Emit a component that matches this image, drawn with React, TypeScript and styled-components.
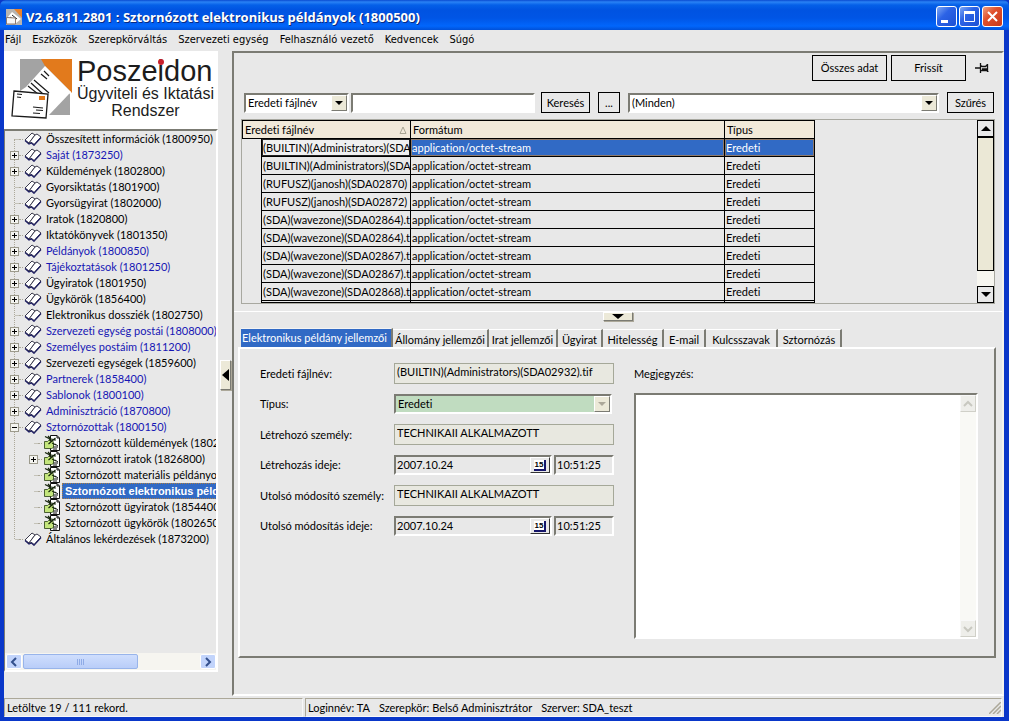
import React from "react";
import styled, { createGlobalStyle, css } from "styled-components";

const face = "#e8e8e8";
const cream = "#ece9d8";
const shade = "#7b7b73";
const blue = "#316ac5";
const uiFont = 'Lato, "Liberation Sans", sans-serif';
const logoFont = '"Liberation Sans", Arial, sans-serif';
const menuFont = '"DejaVu Sans Condensed", "DejaVu Sans", sans-serif';
const titleFont = '"Open Sans", "DejaVu Sans", sans-serif';

const GlobalStyle = createGlobalStyle`
  *, *::before, *::after { box-sizing: border-box; }
  body { margin: 0; background: ${face}; color: #000; font: 11px/16px ${uiFont}; font-variant-ligatures: none; }
  button, input, select, textarea { font: inherit; font-variant-ligatures: none; color: inherit; margin: 0; border-radius: 0; }
  button { padding: 0; }
  svg { display: block; }
`;

const sunken = css`
  border: 2px solid;
  border-color: ${shade} #fff #fff ${shade};
`;
const raised = css`
  border: 1px solid;
  border-color: #fff ${shade} ${shade} #fff;
  box-shadow: 1px 1px 0 #aca899;
`;

const Window = styled.div`
  min-height: 100vh;
  display: flex;
  flex-direction: column;
  padding: 0 5px 4px 4px;
  background: #0a37c9;
`;

const TitleBar = styled.header`
  height: 30px;
  display: flex;
  align-items: center;
  gap: 4px;
  margin: 0 -5px 0 -4px;
  padding: 3px 6px 0 6px;
  border-radius: 6px 6px 0 0;
  background: linear-gradient(#0a4bd0 0, #2a82f5 2px, #0560e8 5px, #0053e1 10px, #0055e5 18px, #0166fc 26px, #0050d8 30px);
`;
const Title = styled.h1`
  flex: 1;
  margin: 0;
  color: #fff;
  font: bold 13px/16px ${titleFont};
  text-shadow: 1px 1px 0 #0a2a80;
`;
const WindowButtons = styled.div`
  display: flex;
  gap: 2px;
`;
const WindowButton = styled.button<{ $close?: boolean }>`
  width: 21px;
  height: 21px;
  border: 1px solid #fff;
  border-radius: 3px;
  background: ${(p) =>
    p.$close
      ? "linear-gradient(135deg, #f0a080, #e0502c 40%, #c8381a)"
      : "linear-gradient(135deg, #7fa8f4, #2c63e6 40%, #1c50d4)"};
`;

const MenuBar = styled.nav`
  height: 21px;
  display: flex;
  align-items: center;
  gap: 11px;
  padding: 0 1px 2px;
  background: ${face};
  font-family: ${menuFont};
`;
const MenuLink = styled.a`
  color: #000;
  text-decoration: none;
`;

const Body = styled.div`
  flex: 1;
  display: flex;
  background: ${face};
`;
const Sidebar = styled.aside`
  width: 214px;
  flex: none;
  display: flex;
  flex-direction: column;
  padding-bottom: 26px;
`;
const LogoBox = styled.div`
  height: 78px;
  display: flex;
  gap: 5px;
  padding: 7px 0 0 7px;
  background: #fff;
`;
const LogoText = styled.div`
  color: #1c1c1c;
  font-family: ${logoFont};
  font-size: 16px;
  line-height: 17px;
  text-align: center;
  white-space: nowrap;
`;
const Brand = styled.div`
  font-size: 29px;
  line-height: 27px;
  text-align: left;
`;
const DottedI = styled.span`
  position: relative;
  &::after {
    content: "";
    position: absolute;
    top: 4px;
    left: 0;
    width: 6px;
    height: 6px;
    border-radius: 50%;
    background: #c8202c;
  }
`;

const TreeBox = styled.div`
  flex: 1;
  display: flex;
  flex-direction: column;
  justify-content: space-between;
  overflow: hidden;
  ${sunken}
  border-left-width: 1px;
`;
const TreeList = styled.ul`
  position: relative;
  margin: 0;
  padding: 0;
  list-style: none;
  &::before {
    content: "";
    position: absolute;
    top: 8px;
    bottom: 8px;
    left: 9px;
    border-left: 1px dotted #aca899;
  }
`;
const TreeRow = styled.li<{ $level: number }>`
  position: relative;
  height: 16px;
  display: flex;
  align-items: center;
  padding-left: ${(p) => (p.$level ? 24 : 5)}px;
  white-space: nowrap;
`;
const Toggle = styled.button`
  width: 9px;
  height: 9px;
  flex: none;
  border: 1px solid #9c9a8c;
  background: #f4f4f0;
`;
const Stub = styled.span`
  width: 9px;
  height: 1px;
  flex: none;
  background: linear-gradient(90deg, transparent 50%, #c4c2b8 50%);
`;
const Twig = styled.span`
  width: 4px;
  flex: none;
  border-top: 1px dotted #aca899;
`;
const IconSlot = styled.span`
  width: 20px;
  flex: none;
  display: flex;
  justify-content: center;
`;
const TreeLink = styled.a<{ $blue?: boolean; $selected?: boolean }>`
  padding: 0 0 0 3px;
  line-height: 16px;
  text-decoration: none;
  color: ${(p) => (p.$blue ? "#1616b4" : "#000")};
  ${(p) =>
    p.$selected &&
    css`
      background: ${blue};
      color: #fff;
      font-family: ${logoFont};
      font-weight: bold;
      outline: 1px dotted #b08040;
      outline-offset: -1px;
    `}
`;

const HScroll = styled.div`
  height: 17px;
  display: flex;
  padding: 1px 0 1px 1px;
  background: #f6f5f0;
`;
const HScrollButton = styled.button`
  width: 16px;
  display: grid;
  place-items: center;
  border: 1px solid #fff;
  border-radius: 2px;
  background: #c2d4fb;
`;
const HThumb = styled.div`
  width: 115px;
  display: grid;
  place-items: center;
  margin: 0 auto 0 1px;
  border: 1px solid #98b4ea;
  border-radius: 2px;
  background: linear-gradient(#cfdefd, #b9cdf8);
`;

const Splitter = styled.div`
  width: 14px;
  flex: none;
  display: flex;
  align-items: center;
  justify-content: center;
`;
const SplitHandle = styled.button<{ $horizontal?: boolean }>`
  width: ${(p) => (p.$horizontal ? 30 : 11)}px;
  height: ${(p) => (p.$horizontal ? 9 : 30)}px;
  display: grid;
  place-items: center;
  background: ${cream};
  ${raised}
`;

const Main = styled.main`
  flex: 1;
  min-width: 0;
  display: flex;
  flex-direction: column;
  margin-bottom: 2px;
  border: 2px solid;
  border-color: ${shade} #f4f3ee #fff ${shade};
`;
const TopPane = styled.section`
  padding: 2px 7px 7px 7px;
  border-bottom: 1px solid #fff;
`;
const Toolbar = styled.div`
  display: flex;
  justify-content: flex-end;
  align-items: center;
  gap: 4px;
`;
const FlatButton = styled.button<{ $width: number; $tall?: boolean }>`
  width: ${(p) => p.$width}px;
  height: ${(p) => (p.$tall ? 26 : 21)}px;
  flex: none;
  border: 1px solid #000;
  background: ${face};
`;
const PinButton = styled.button`
  width: 25px;
  height: 24px;
  display: grid;
  place-items: center;
  border: 0;
  background: none;
`;
const FilterBar = styled.div`
  display: flex;
  align-items: center;
  padding: 11px 1px 6px 3px;
`;
const Gap = styled.span`
  width: 8px;
  flex: none;
`;
const SelectBox = styled.div<{ $width?: number; $tint?: string }>`
  display: grid;
  height: 20px;
  ${(p) => (p.$width ? `flex: 0 0 ${p.$width}px;` : "flex: 1; min-width: 0;")}
  background: ${(p) => p.$tint || "#fff"};
  ${sunken}
`;
const NativeSelect = styled.select`
  grid-area: 1 / 1;
  width: 100%;
  min-width: 0;
  padding: 0 18px 0 2px;
  border: 0;
  appearance: none;
  background: transparent;
  opacity: 1;
  &:disabled { color: #000; opacity: 1; }
`;
const DropArrow = styled.span`
  grid-area: 1 / 1;
  justify-self: end;
  width: 16px;
  display: grid;
  place-items: center;
  pointer-events: none;
  background: ${cream};
  border: 1px solid;
  border-color: #fff ${shade} ${shade} #fff;
`;
const SearchInput = styled.input`
  width: 184px;
  height: 20px;
  margin: 0 6px 0 2px;
  background: #fff;
  ${sunken}
`;

const GridFrame = styled.div`
  height: 185px;
  display: flex;
  justify-content: space-between;
  overflow: hidden;
  border: 1px solid #a8a8a0;
`;
const Table = styled.table`
  width: 573px;
  flex: none;
  table-layout: fixed;
  border-collapse: separate;
  border-spacing: 0;
`;
const Th = styled.th`
  height: 19px;
  padding: 0 3px 0 2px;
  border: solid #000;
  border-width: 1px 1px 1px 0;
  background: #f1e9da;
  font-weight: normal;
  text-align: left;
  &:first-child { border-left-width: 1px; }
`;
const HeadContent = styled.span`
  display: flex;
  align-items: center;
  justify-content: space-between;
`;
const Td = styled.td<{ $selected?: boolean; $focused?: boolean }>`
  height: 18px;
  padding: 0 1px;
  overflow: hidden;
  white-space: nowrap;
  border: solid #000;
  border-width: 0 1px 1px 0;
  ${(p) =>
    p.$selected &&
    css`
      background: ${blue};
      color: #fff;
      box-shadow: inset 0 0 0 1px #8d7a6c;
    `}
  ${(p) =>
    p.$focused &&
    css`
      background: #f0f0f0;
      box-shadow: inset 0 0 0 1px #222;
    `}
`;
const Indicator = styled.td`
  padding: 0;
  border-right: 1px solid #000;
`;
const Sliver = styled.td`
  height: 2px;
  padding: 0;
  border: solid #000;
  border-width: 0 1px 1px 0;
`;
const VScroll = styled.div`
  width: 17px;
  display: flex;
  flex-direction: column;
  background: #f7f6f0;
`;
const VScrollButton = styled.button`
  height: 17px;
  display: grid;
  place-items: center;
  border: 1px solid #000;
  background: ${face};
`;
const VThumb = styled.div`
  height: 134px;
  margin-bottom: auto;
  border: 1px solid #000;
  background: #ebe8d6;
`;

const PaneSplitter = styled.div`
  display: flex;
  justify-content: center;
  height: 15px;
`;
const TabRow = styled.div`
  display: flex;
  align-items: flex-end;
  height: 21px;
  padding-left: 7px;
`;
const Tab = styled.button<{ $width: number; $active?: boolean }>`
  width: ${(p) => p.$width}px;
  height: 19px;
  padding: 2px 0 0;
  border: 0;
  border-top: 1px solid #fff;
  border-right: 2px solid ${shade};
  background: ${face};
  line-height: 16px;
  white-space: nowrap;
  ${(p) =>
    p.$active &&
    css`
      height: 20px;
      padding: 0 0 1px 1px;
      border-top-color: #f4f4f4;
      background: ${blue};
      color: #fff;
      text-align: left;
    `}
`;
const TabPanel = styled.section`
  display: flex;
  gap: 20px;
  margin: -1px 6px 0 4px;
  padding: 14px 16px 17px 20px;
  border: 2px solid;
  border-color: #fff ${shade} ${shade} #fff;
`;
const Form = styled.form`
  width: 354px;
  flex: none;
  display: flex;
  flex-direction: column;
  gap: 10px;
`;
const FormRow = styled.div`
  display: flex;
  align-items: center;
`;
const Label = styled.label`
  width: 134px;
  flex: none;
`;
const ReadInput = styled.input`
  flex: 1;
  min-width: 0;
  height: 21px;
  padding: 0 2px 4px;
  border: 1px solid #a5a899;
  background: #e8e8e0;
`;
const DateBox = styled.div`
  width: 158px;
  height: 20px;
  display: flex;
  ${sunken}
`;
const DateInput = styled.input`
  flex: 1;
  min-width: 0;
  padding: 0 1px;
  border: 0;
  background: transparent;
`;
const CalendarButton = styled.button`
  width: 20px;
  border: 1px solid;
  border-color: #fff #333 #333 #fff;
  background: ${face};
  display: grid;
  place-items: center;
`;
const DayIcon = styled.span`
  width: 12px;
  height: 11px;
  border: solid #15156a;
  border-width: 0 2px 2px 0;
  background: #fff;
  font: bold 8px/9px ${logoFont};
`;
const TimeInput = styled.input`
  width: 60px;
  height: 20px;
  margin-left: 2px;
  padding: 0 1px 2px;
  background: transparent;
  ${sunken}
`;
const NoteColumn = styled.div`
  flex: 1;
  min-width: 0;
  display: flex;
  flex-direction: column;
  gap: 9px;
`;
const NoteLabel = styled.label`
  line-height: 21px;
`;
const NoteBox = styled.div`
  height: 246px;
  display: flex;
  background: #fff;
  ${sunken}
`;
const Note = styled.textarea`
  flex: 1;
  min-width: 0;
  resize: none;
  overflow: hidden;
  border: 0;
  background: #fff;
`;
const NoteScroll = styled.div`
  width: 16px;
  display: flex;
  flex-direction: column;
  justify-content: space-between;
  background: #f9f9f5;
`;
const NoteScrollButton = styled.button`
  height: 17px;
  display: grid;
  place-items: center;
  border: 1px solid;
  border-color: #f8f8f8 #d0d0c8 #d0d0c8 #f8f8f8;
  background: #eeeeea;
`;

const StatusBar = styled.footer`
  height: 19px;
  display: flex;
  align-items: stretch;
  background: ${face};
`;
const StatusCell = styled.div<{ $width?: number }>`
  ${(p) => (p.$width ? `flex: 0 0 ${p.$width}px;` : "flex: 1;")}
  display: flex;
  align-items: center;
  gap: 9px;
  margin-right: 2px;
  padding-left: 2px;
  border: 1px solid;
  border-color: #aca899 #f8f8f8 #f8f8f8 #aca899;
`;
const Grip = styled.span`
  display: flex;
  align-items: flex-end;
  margin-left: auto;
`;

const BookIcon = () => (
  <svg width="18" height="14" viewBox="0 0 18 14" aria-hidden="true">
    <path d="M1 8 8 1 11 3 5 11Z" fill="#fff" stroke="#3a3a4c" />
    <path d="M5 11 11 3 13 2 17 5 10 12.500 8 10.500Z" fill="#fff" stroke="#3a3a4c" />
    <path d="M1 8.500 5 12 7.500 11 10 13.300 17 5.500" fill="none" stroke="#1c1c60" strokeWidth="1.200" />
  </svg>
);
const PageIcon = () => (
  <svg width="16" height="16" viewBox="0 0 16 16" aria-hidden="true">
    <path d="M6.500.5H13l2.500 2.500V15.500H6.500Z" fill="#fff" stroke="#111" />
    <path d="M13 .5V3h2.500M9 12h5M11 9l3 2M9 14h4" fill="none" stroke="#111" />
    <path d="M.5 6.500h3l1-1h4l1 2v5l-2 1h-7Z" fill="#c4e67c" stroke="#263c12" strokeWidth=".8" />
    <path d="M1 1.500l4 2 2 3M4 1l3 3 5 1M4.500 9l7-6M8 8l4 2" fill="none" stroke="#16240c" strokeWidth="1.200" />
  </svg>
);
const Triangle = ({ points, w, h, fill = "#000" }: { points: string; w: number; h: number; fill?: string }) => (
  <svg width={w} height={h} viewBox={`0 0 ${w} ${h}`} aria-hidden="true">
    <polygon points={points} fill={fill} />
  </svg>
);
const Chevron = ({ d, color = "#33508c" }: { d: string; color?: string }) => (
  <svg width="10" height="10" viewBox="0 0 10 10" aria-hidden="true">
    <path d={d} fill="none" stroke={color} strokeWidth="2" />
  </svg>
);
const Logo = () => (
  <svg width="61" height="62" viewBox="0 0 61 62" aria-hidden="true">
    <path d="M9 1h50v56H9Z" fill="#a3a3a3" />
    <path d="M30 1h31v34L34 8Z" fill="#e27a1c" />
    <path d="M59 35h2v22h-2Z" fill="#fff" />
    <path d="M34 8 60 34 41 57 38 62H0V33H9L15 29Z" fill="#fff" />
    <path d="M58 36 59 57H38Z" fill="#a3a3a3" />
    <path d="M17 28 27 36M20 25 32 36M23 22 38 35M30 16l6 5M33 13l5 5" stroke="#1a1a1a" strokeWidth="1.200" fill="none" />
    <path d="M3 33 37 36 35 60 1 58Z" fill="#fff" stroke="#1a1a1a" strokeWidth="1.300" />
    <path d="M6 36l5 .5M6 39l4 .5M22 49l10 1M25 52l7 .5M22 55l7 .5" stroke="#1a1a1a" strokeWidth="1.100" />
    <path d="M28 38h6v4h-6Z" fill="#e27a1c" />
  </svg>
);
const AppIcon = () => (
  <svg width="16" height="16" viewBox="0 0 16 16" aria-hidden="true">
    <path d="M0 0h16v16H0Z" fill="#b8b4b0" />
    <path d="M8 0h8v9Z" fill="#e8822c" />
    <path d="M6 3 15 10 9 15H1V9Z" fill="#fff" />
    <path d="M6 6l5 4M4 8l4 3" stroke="#222" />
    <path d="M.5 8.500 9.500 9v6H.5Z" fill="#f6f6f6" stroke="#8a7870" />
  </svg>
);
const PinIcon = () => (
  <svg width="15" height="12" viewBox="0 0 15 12" aria-hidden="true">
    <path d="M0 6h5M5.500 1v10M5.500 3.500l2 1h3l2-2M5.500 8.500h6l2 1M12.500 2v8M7 7h5" stroke="#111" strokeWidth="1.300" fill="none" />
  </svg>
);

type Node = { text: string; level?: number; blue?: boolean; toggle?: "+" | "-"; selected?: boolean };
const tree: Node[] = [
  { text: "Összesített információk (1800950)" },
  { text: "Saját (1873250)", blue: true, toggle: "+" },
  { text: "Küldemények (1802800)", toggle: "+" },
  { text: "Gyorsiktatás (1801900)" },
  { text: "Gyorsügyirat (1802000)" },
  { text: "Iratok (1820800)", toggle: "+" },
  { text: "Iktatókönyvek (1801350)", toggle: "+" },
  { text: "Példányok (1800850)", blue: true, toggle: "+" },
  { text: "Tájékoztatások (1801250)", blue: true, toggle: "+" },
  { text: "Ügyiratok (1801950)", toggle: "+" },
  { text: "Ügykörök (1856400)", toggle: "+" },
  { text: "Elektronikus dossziék (1802750)" },
  { text: "Szervezeti egység postái (1808000)", blue: true, toggle: "+" },
  { text: "Személyes postáim (1811200)", blue: true, toggle: "+" },
  { text: "Szervezeti egységek (1859600)", toggle: "+" },
  { text: "Partnerek (1858400)", blue: true, toggle: "+" },
  { text: "Sablonok (1800100)", blue: true, toggle: "+" },
  { text: "Adminisztráció (1870800)", blue: true, toggle: "+" },
  { text: "Sztornózottak (1800150)", blue: true, toggle: "-" },
  { text: "Sztornózott küldemények (1802500)", level: 1 },
  { text: "Sztornózott iratok (1826800)", level: 1, toggle: "+" },
  { text: "Sztornózott materiális példányok", level: 1 },
  { text: "Sztornózott elektronikus példányok", level: 1, selected: true },
  { text: "Sztornózott ügyiratok (1854400)", level: 1 },
  { text: "Sztornózott ügykörök (1802650)", level: 1 },
  { text: "Általános lekérdezések (1873200)" },
];

const menu = ["Fájl", "Eszközök", "Szerepkörváltás", "Szervezeti egység", "Felhasználó vezető", "Kedvencek", "Súgó"];
const files = [
  "(BUILTIN)(Administrators)(SDA02932).tif",
  "(BUILTIN)(Administrators)(SDA02933).tif",
  "(RUFUSZ)(janosh)(SDA02870)",
  "(RUFUSZ)(janosh)(SDA02872)",
  "(SDA)(wavezone)(SDA02864).tif",
  "(SDA)(wavezone)(SDA02864).tif",
  "(SDA)(wavezone)(SDA02867).tif",
  "(SDA)(wavezone)(SDA02867).tif",
  "(SDA)(wavezone)(SDA02868).tif",
];
const tabs = [
  { text: "Elektronikus példány jellemzői", width: 152 },
  { text: "Állomány jellemzői", width: 96 },
  { text: "Irat jellemzői", width: 69 },
  { text: "Ügyirat", width: 45 },
  { text: "Hitelesség", width: 61 },
  { text: "E-mail", width: 42 },
  { text: "Kulcsszavak", width: 72 },
  { text: "Sztornózás", width: 64 },
];

const DateRow = ({ id, label }: { id: string; label: string }) => (
  <FormRow>
    <Label htmlFor={id}>{label}</Label>
    <DateBox>
      <DateInput id={id} defaultValue="2007.10.24" />
      <CalendarButton type="button" aria-label="Naptár">
        <DayIcon>15</DayIcon>
      </CalendarButton>
    </DateBox>
    <TimeInput aria-label={`${label} időpont`} defaultValue="10:51:25" />
  </FormRow>
);
const TextRow = ({ id, label, value }: { id: string; label: string; value: string }) => (
  <FormRow>
    <Label htmlFor={id}>{label}</Label>
    <ReadInput id={id} readOnly value={value} />
  </FormRow>
);

export default function App() {
  return (
    <Window>
      <GlobalStyle />
      <TitleBar>
        <AppIcon />
        <Title>V2.6.811.2801 : Sztornózott elektronikus példányok (1800500)</Title>
        <WindowButtons>
          <WindowButton aria-label="Kis méret">
            <svg width="19" height="19"><path d="M4 13h7v3H4Z" fill="#fff" /></svg>
          </WindowButton>
          <WindowButton aria-label="Teljes méret">
            <svg width="19" height="19"><path d="M4.500 5h10v9.500h-10Z" fill="none" stroke="#fff" /><path d="M4 4h11v3H4Z" fill="#fff" /></svg>
          </WindowButton>
          <WindowButton $close aria-label="Bezárás">
            <svg width="19" height="19"><path d="M5 5l9 9M14 5l-9 9" stroke="#fff" strokeWidth="2" /></svg>
          </WindowButton>
        </WindowButtons>
      </TitleBar>
      <MenuBar>
        {menu.map((m) => (
          <MenuLink key={m} href="#">{m}</MenuLink>
        ))}
      </MenuBar>
      <Body>
        <Sidebar>
          <LogoBox>
            <Logo />
            <LogoText>
              <Brand>Posze<DottedI>i</DottedI>don</Brand>
              Ügyviteli és Iktatási
              <br />
              Rendszer
            </LogoText>
          </LogoBox>
          <TreeBox>
            <TreeList>
              {tree.map((n) => (
                <TreeRow key={n.text} $level={n.level || 0}>
                  {n.toggle ? (
                    <Toggle aria-label={n.toggle === "+" ? "Kinyitás" : "Becsukás"}>
                      <svg width="7" height="7">
                        <path d={n.toggle === "+" ? "M1 3h5v1H1ZM3 1h1v5H3Z" : "M1 3h5v1H1Z"} fill="#000" />
                      </svg>
                    </Toggle>
                  ) : (
                    <Stub />
                  )}
                  <Twig />
                  <IconSlot>{n.level ? <PageIcon /> : <BookIcon />}</IconSlot>
                  <TreeLink href="#" $blue={n.blue} $selected={n.selected}>{n.text}</TreeLink>
                </TreeRow>
              ))}
            </TreeList>
            <HScroll>
              <HScrollButton aria-label="Balra"><Chevron d="M7 1 3 5l4 4" /></HScrollButton>
              <HThumb>
                <svg width="8" height="6"><path d="M.5 0v6M2.500 0v6M4.500 0v6M6.500 0v6" stroke="#8fabe6" /></svg>
              </HThumb>
              <HScrollButton aria-label="Jobbra"><Chevron d="M3 1l4 4-4 4" /></HScrollButton>
            </HScroll>
          </TreeBox>
        </Sidebar>
        <Splitter>
          <SplitHandle aria-label="Oldalsáv elrejtése">
            <Triangle w={7} h={12} points="7,0 7,12 0,6" />
          </SplitHandle>
        </Splitter>
        <Main>
          <TopPane>
            <Toolbar>
              <FlatButton $width={75} $tall>Összes adat</FlatButton>
              <FlatButton $width={75} $tall>Frissít</FlatButton>
              <PinButton aria-label="Rögzítés"><PinIcon /></PinButton>
            </Toolbar>
            <FilterBar>
              <SelectBox $width={105}>
                <NativeSelect aria-label="Keresési mező">
                  <option>Eredeti fájlnév</option>
                </NativeSelect>
                <DropArrow><Triangle w={8} h={4} points="0,0 8,0 4,4" /></DropArrow>
              </SelectBox>
              <SearchInput aria-label="Keresett szöveg" />
              <FlatButton $width={49}>Keresés</FlatButton>
              <Gap />
              <FlatButton $width={22}>...</FlatButton>
              <Gap />
              <SelectBox>
                <NativeSelect aria-label="Szűrő">
                  <option>(Minden)</option>
                </NativeSelect>
                <DropArrow><Triangle w={8} h={4} points="0,0 8,0 4,4" /></DropArrow>
              </SelectBox>
              <Gap />
              <FlatButton $width={47}>Szűrés</FlatButton>
            </FilterBar>
            <GridFrame>
              <Table>
                <colgroup>
                  <col width="20" />
                  <col width="149" />
                  <col width="314" />
                  <col width="90" />
                </colgroup>
                <thead>
                  <tr>
                    <Th colSpan={2}>
                      <HeadContent>
                        Eredeti fájlnév
                        <svg width="8" height="8"><path d="M4 1 7 7.500H1Z" fill="none" stroke="#a8a594" /></svg>
                      </HeadContent>
                    </Th>
                    <Th>Formátum</Th>
                    <Th>Típus</Th>
                  </tr>
                </thead>
                <tbody>
                  {files.map((f, i) => (
                    <tr key={i}>
                      <Indicator />
                      <Td $focused={i === 0}>{f}</Td>
                      <Td $selected={i === 0}>application/octet-stream</Td>
                      <Td $selected={i === 0}>Eredeti</Td>
                    </tr>
                  ))}
                  <tr aria-hidden="true">
                    <Indicator />
                    <Sliver />
                    <Sliver />
                    <Sliver />
                  </tr>
                </tbody>
              </Table>
              <VScroll>
                <VScrollButton aria-label="Fel"><Triangle w={10} h={5} points="5,0 10,5 0,5" /></VScrollButton>
                <VThumb />
                <VScrollButton aria-label="Le"><Triangle w={10} h={5} points="0,0 10,0 5,5" /></VScrollButton>
              </VScroll>
            </GridFrame>
          </TopPane>
          <PaneSplitter>
            <SplitHandle $horizontal aria-label="Részletek elrejtése">
              <Triangle w={12} h={5} points="0,0 12,0 6,5" />
            </SplitHandle>
          </PaneSplitter>
          <TabRow role="tablist">
            {tabs.map((t, i) => (
              <Tab key={t.text} role="tab" aria-selected={i === 0} $width={t.width} $active={i === 0}>{t.text}</Tab>
            ))}
          </TabRow>
          <TabPanel role="tabpanel">
            <Form>
              <TextRow id="file" label="Eredeti fájlnév:" value="(BUILTIN)(Administrators)(SDA02932).tif" />
              <FormRow>
                <Label htmlFor="type">Típus:</Label>
                <SelectBox $width={218} $tint="#c0dcc0">
                  <NativeSelect id="type" disabled>
                    <option>Eredeti</option>
                  </NativeSelect>
                  <DropArrow><Triangle w={8} h={4} points="0,0 8,0 4,4" fill="#aca899" /></DropArrow>
                </SelectBox>
              </FormRow>
              <TextRow id="creator" label="Létrehozó személy:" value="TECHNIKAII ALKALMAZOTT" />
              <DateRow id="created" label="Létrehozás ideje:" />
              <TextRow id="editor" label="Utolsó módosító személy:" value="TECHNIKAII ALKALMAZOTT" />
              <DateRow id="edited" label="Utolsó módosítás ideje:" />
            </Form>
            <NoteColumn>
              <NoteLabel htmlFor="note">Megjegyzés:</NoteLabel>
              <NoteBox>
                <Note id="note" />
                <NoteScroll>
                  <NoteScrollButton aria-label="Fel"><Chevron d="M1 7l4-4 4 4" color="#c8c8c0" /></NoteScrollButton>
                  <NoteScrollButton aria-label="Le"><Chevron d="M1 3l4 4 4-4" color="#c8c8c0" /></NoteScrollButton>
                </NoteScroll>
              </NoteBox>
            </NoteColumn>
          </TabPanel>
        </Main>
      </Body>
      <StatusBar>
        <StatusCell $width={299}>Letöltve 19 / 111 rekord.</StatusCell>
        <StatusCell>
          <span>Loginnév: TA</span>
          <span>Szerepkör: Belső Adminisztrátor</span>
          <span>Szerver: SDA_teszt</span>
          <Grip>
            <svg width="12" height="12"><path d="M0 12 12 0M4 12l8-8M8 12l4-4" stroke="#aca899" strokeWidth="1.500" /></svg>
          </Grip>
        </StatusCell>
      </StatusBar>
    </Window>
  );
}
